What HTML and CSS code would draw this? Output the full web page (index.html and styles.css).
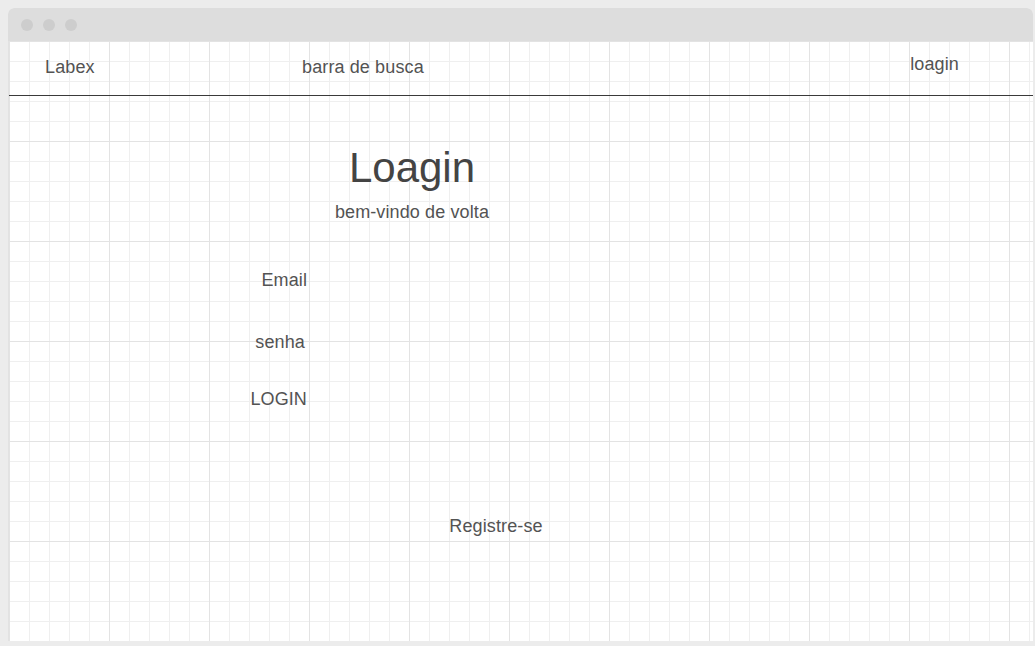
FILE: index.html
```html
<!DOCTYPE html>
<html lang="pt">
<head>
<meta charset="utf-8">
<title>Loagin</title>
<link rel="stylesheet" href="styles.css">
</head>
<body>
<div class="window">
  <div class="titlebar">
    <span class="dot"></span><span class="dot"></span><span class="dot"></span>
  </div>
  <div class="canvas">
    <header class="topbar">
      <div class="brand">Labex</div>
      <div class="search">barra de busca</div>
      <div class="login-link">loagin</div>
    </header>
    <main class="main">
      <section class="hero">
        <h1 class="title">Loagin</h1>
        <p class="subtitle">bem-vindo de volta</p>
      </section>
      <div class="form">
        <div class="label label-email">Email</div>
        <div class="label label-pass">senha</div>
        <div class="label label-btn">LOGIN</div>
      </div>
      <div class="register">Registre-se</div>
    </main>
  </div>
</div>
</body>
</html>
```
FILE: styles.css
```css
html, body {
  margin: 0;
  padding: 0;
}
body {
  background: #ececec;
  padding: 8px 0 0 8px;
  font-family: "Liberation Sans", Arial, sans-serif;
  color: #535353;
  width: 1035px;
  height: 646px;
  box-sizing: border-box;
  overflow: hidden;
}
.window {
  width: 1025px;
  height: 633px;
  display: flex;
  flex-direction: column;
  border-radius: 6px 6px 0 0;
  overflow: hidden;
  background: #ffffff;
}
.titlebar {
  height: 33px;
  background: #dddddd;
  display: flex;
  align-items: center;
  gap: 10px;
  padding-left: 13px;
  flex: none;
}
.dot {
  width: 12px;
  height: 12px;
  border-radius: 50%;
  background: #cdcdcd;
}
.canvas {
  flex: 1;
  border-left: 1px solid #e2e2e2;
  background-color: #ffffff;
  background-image:
    linear-gradient(to right, #e3e3e3 1px, transparent 1px),
    linear-gradient(to bottom, #e3e3e3 1px, transparent 1px),
    linear-gradient(to right, #efefef 1px, transparent 1px),
    linear-gradient(to bottom, #efefef 1px, transparent 1px);
  background-size: 100px 100px, 100px 100px, 20px 20px, 20px 20px;
  background-position: 0 0;
  display: flex;
  flex-direction: column;
  letter-spacing: 0.12px;
}
.topbar {
  height: 54px;
  border-bottom: 1px solid #3a3a3a;
  display: flex;
  align-items: center;
  font-size: 18px;
  line-height: 22px;
  flex: none;
}
.brand {
  width: 257px;
  padding-left: 36px;
  padding-bottom: 2px;
}
.search {
  flex: 1;
  padding-bottom: 2px;
}
.login-link {
  padding-right: 74px;
  padding-bottom: 8px;
}
.main {
  display: flex;
  flex-direction: column;
  padding-top: 48px;
}
.hero {
  width: 400px;
  margin-left: 203px;
  text-align: center;
}
.title {
  margin: 0;
  font-size: 42px;
  line-height: 48px;
  font-weight: normal;
  color: #444444;
  letter-spacing: 0;
}
.subtitle {
  margin: 9px 0 0;
  font-size: 18px;
  line-height: 22px;
}
.form {
  width: 298px;
  display: flex;
  flex-direction: column;
  align-items: flex-end;
  margin-top: 46px;
  font-size: 18px;
  line-height: 22px;
}
.label-pass {
  margin-top: 40px;
  padding-right: 2px;
}
.label-btn {
  margin-top: 35px;
}
.register {
  width: 200px;
  margin-left: 387px;
  margin-top: 105px;
  text-align: center;
  font-size: 18px;
  line-height: 22px;
}
```
